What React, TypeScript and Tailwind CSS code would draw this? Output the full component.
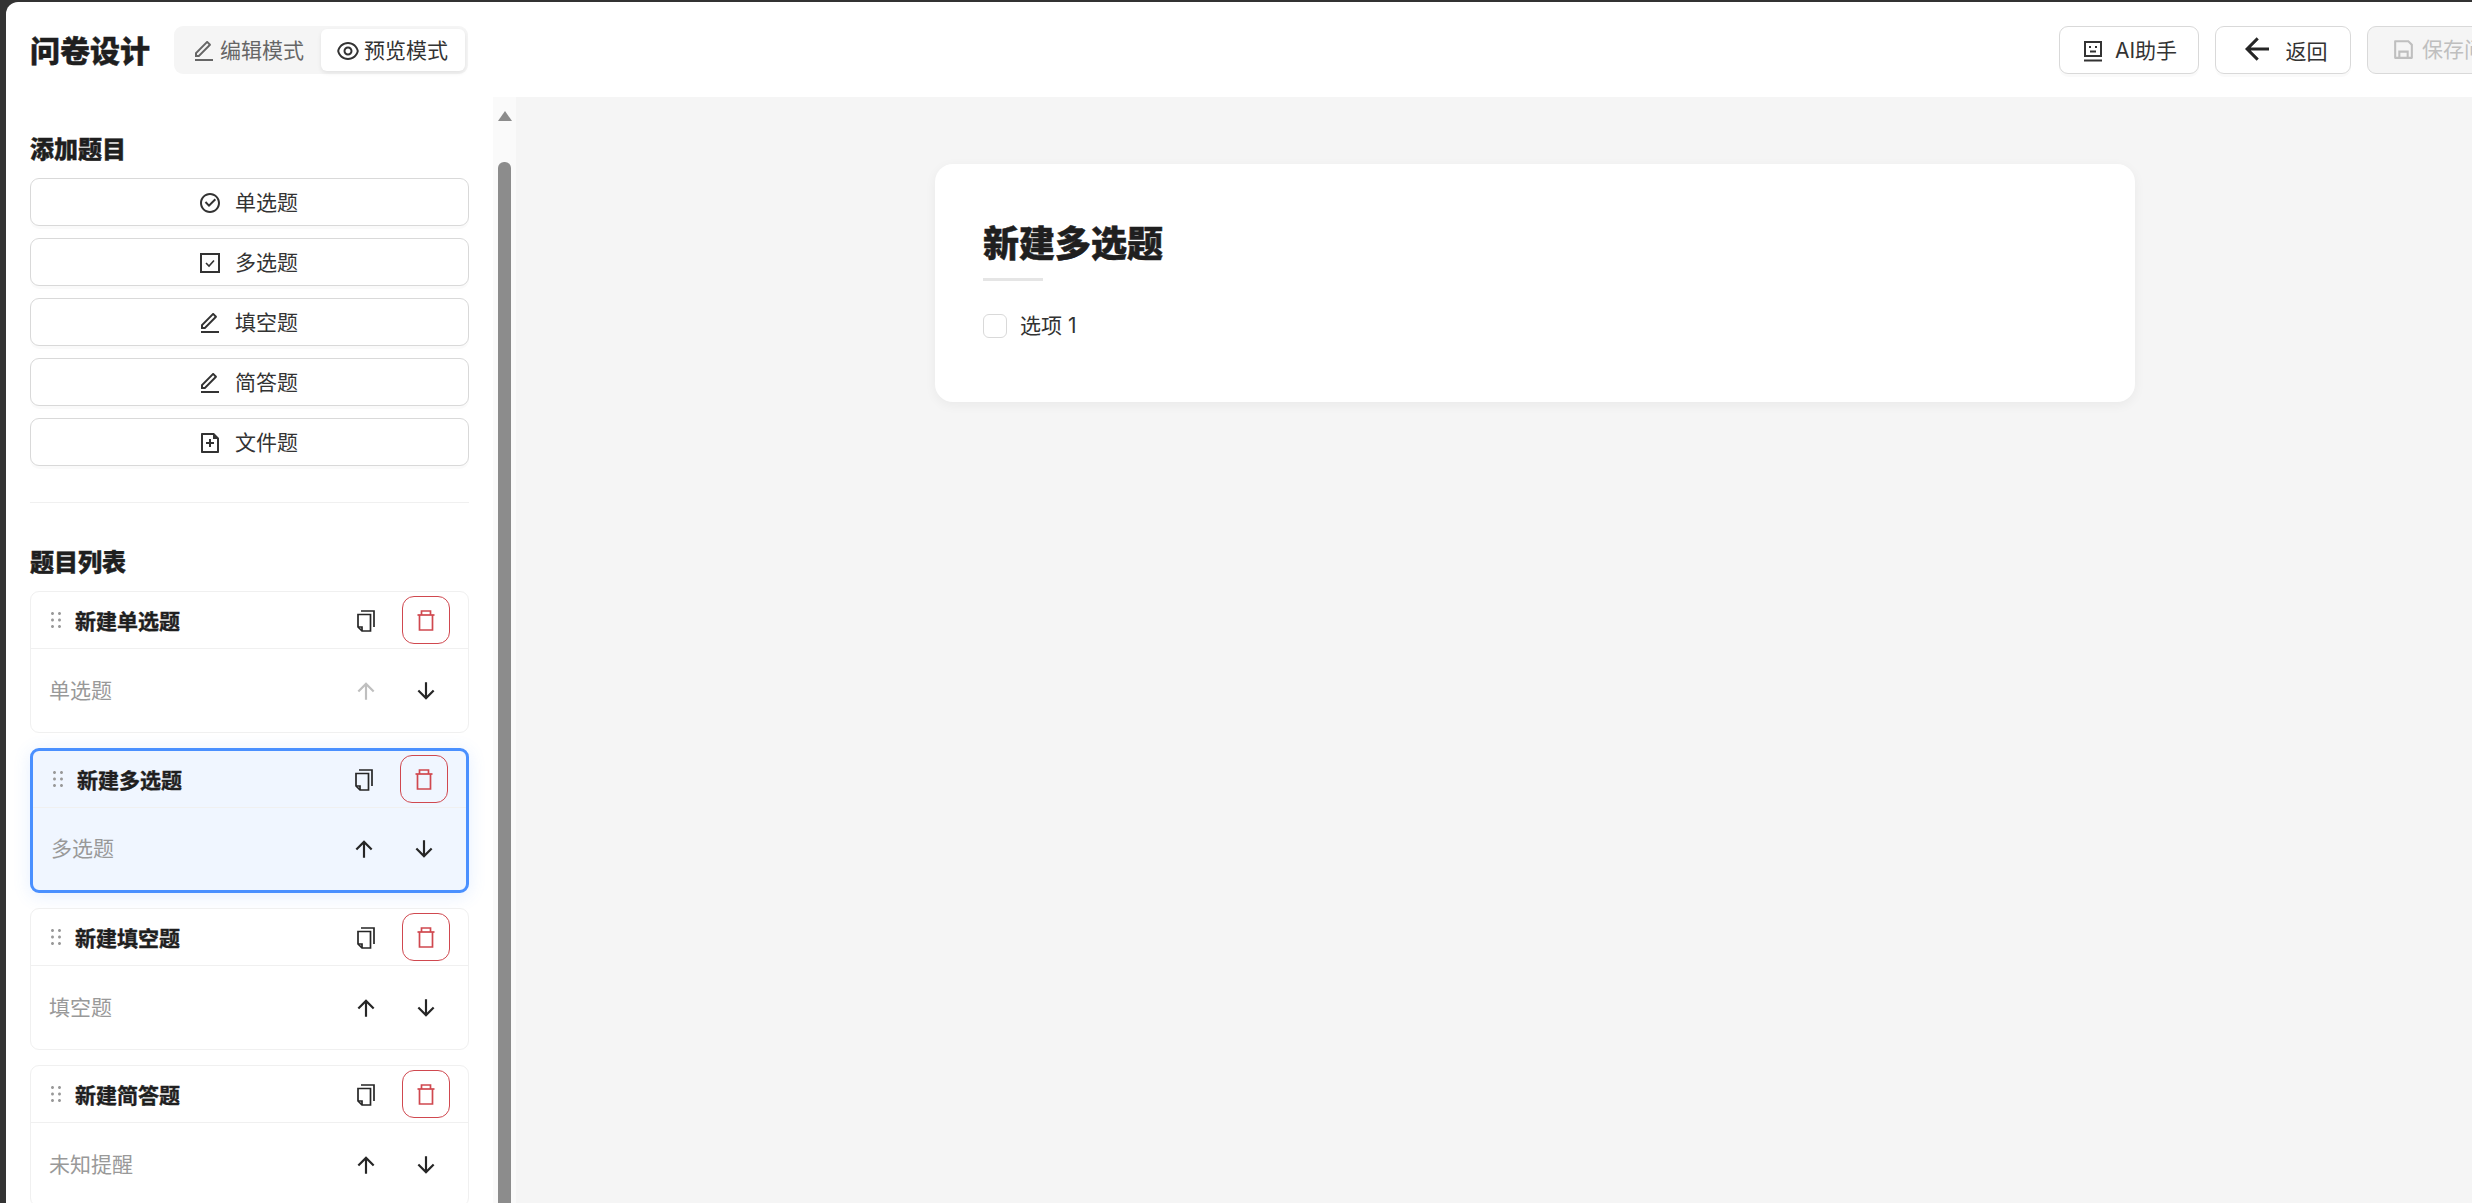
import {
  RiArrowDownLine,
  RiArrowLeftLine,
  RiArrowUpLine,
  RiCheckboxCircleLine,
  RiDraggable,
  RiEditLine,
  RiEyeLine,
  RiFileAddLine,
  RiSaveLine,
} from "react-icons/ri";

function SquareCheckIcon({ className }: { className?: string }) {
  return (
    <svg viewBox="0 0 24 24" className={className} fill="none" stroke="currentColor" strokeWidth="2">
      <rect x="3" y="3" width="18" height="18" />
      <path d="M8 12l3 3 5-5.5" strokeWidth="1.6" />
    </svg>
  );
}

const addItems = [
  { label: "单选题", Icon: RiCheckboxCircleLine },
  { label: "多选题", Icon: SquareCheckIcon },
  { label: "填空题", Icon: RiEditLine },
  { label: "简答题", Icon: RiEditLine },
  { label: "文件题", Icon: RiFileAddLine },
];

const questions = [
  { title: "新建单选题", sub: "单选题", upDisabled: true },
  { title: "新建多选题", sub: "多选题", selected: true },
  { title: "新建填空题", sub: "填空题" },
  { title: "新建简答题", sub: "未知提醒" },
];

function CopyIcon() {
  return (
    <svg viewBox="0 0 18 22" className="h-[22px] w-[18px]" fill="none" stroke="currentColor" strokeWidth="1.7">
      <path d="M4 1h13v16" />
      <path d="M1 4.5h12.5V21H5l-4-4z" />
      <path d="M1 17h4v4" />
    </svg>
  );
}

function TrashIcon() {
  return (
    <svg viewBox="0 0 18 21" className="h-[21px] w-[18px]" fill="none" stroke="currentColor" strokeWidth="1.7">
      <path d="M0.5 5h17" />
      <path d="M4.5 5V1h9v4" />
      <path d="M2.5 5v15h13V5" />
    </svg>
  );
}

function RobotIcon() {
  return (
    <svg viewBox="0 0 24 24" className="h-[24px] w-[24px]" fill="none" stroke="currentColor" strokeWidth="2">
      <rect x="4" y="3" width="16" height="14" />
      <path d="M3 21.5h18" />
      <path d="M8 8h2M14 8h2M9 12.5h6" />
    </svg>
  );
}

function QuestionCard({ title, sub, selected, upDisabled }: { title: string; sub: string; selected?: boolean; upDisabled?: boolean }) {
  return (
    <div
      className={
        selected
          ? "rounded-[9px] border-[3px] border-[#4a90ff] bg-[#f0f6ff] shadow-[0_3px_18px_rgba(74,144,255,0.14)]"
          : "rounded-[9px] border border-[#f0f0f0] bg-white"
      }
    >
      <div className="flex h-[57px] items-center border-b border-[#f0f0f0] pl-[13px] pr-[18px]">
        <RiDraggable className="h-[24px] w-[24px] text-[#999999]" />
        <span className="ml-[7px] flex-1 pt-[3px] text-[21px] font-bold text-[#1f1f1f] [-webkit-text-stroke:0.4px_#1f1f1f]">{title}</span>
        <div className="flex gap-[12px]">
          <button className="flex h-[48px] w-[48px] items-center justify-center pt-[2px] text-[#262626]">
            <CopyIcon />
          </button>
          <button className="flex h-[48px] w-[48px] items-center justify-center rounded-[12px] border border-[#d0484f] text-[#d0484f]">
            <TrashIcon />
          </button>
        </div>
      </div>
      <div className={selected ? "flex h-[82px] items-center px-[18px]" : "flex h-[83px] items-center px-[18px]"}>
        <span className="flex-1 text-[21px] text-[#999999]">{sub}</span>
        <div className="flex gap-[12px]">
          <button className={upDisabled ? "flex h-[48px] w-[48px] items-center justify-center text-[#bfbfbf]" : "flex h-[48px] w-[48px] items-center justify-center text-[#262626]"}>
            <RiArrowUpLine className="h-[26px] w-[26px]" />
          </button>
          <button className="flex h-[48px] w-[48px] items-center justify-center text-[#262626]">
            <RiArrowDownLine className="h-[26px] w-[26px]" />
          </button>
        </div>
      </div>
    </div>
  );
}

export default function App() {
  return (
    <div className="h-screen w-screen overflow-hidden bg-[#333333] pl-[6px] pt-[2px] font-['Inter','Noto_Sans_CJK_SC',sans-serif] text-[#333333]">
      <div className="flex h-full w-[2554px] flex-col overflow-hidden rounded-tl-[12px] bg-white">
        {/* header */}
        <header className="flex h-[95px] shrink-0 items-center justify-between pl-[24px] pr-[24px]">
          <div className="flex items-center gap-[24px]">
            <h1 className="pt-[3px] text-[30px] font-black text-[#1f1f1f] [-webkit-text-stroke:0.4px_#1f1f1f]">问卷设计</h1>
            <div className="flex h-[48px] items-center rounded-[9px] bg-[#f5f5f5] p-[3px]">
              <div className="flex h-[42px] w-[144px] items-center justify-center gap-[4px] pr-[2px] pt-[2px] text-[21px] text-[#666666]">
                <RiEditLine className="h-[24px] w-[24px]" />
                编辑模式
              </div>
              <div className="flex h-[42px] w-[144px] items-center justify-center gap-[4px] rounded-[6px] bg-white pr-[2px] pt-[2px] text-[21px] text-[#333333] shadow-[0_2px_4px_rgba(0,0,0,0.08)]">
                <RiEyeLine className="h-[24px] w-[24px]" />
                预览模式
              </div>
            </div>
          </div>
          <div className="flex items-center gap-[16px]">
            <button className="flex h-[48px] w-[140px] items-center justify-center gap-[10px] rounded-[9px] border border-[#d9d9d9] bg-white pt-[2px] text-[21px] shadow-[0_3px_0_rgba(0,0,0,0.02)]">
              <RobotIcon />
              AI助手
            </button>
            <button className="flex h-[48px] w-[136px] items-center justify-center gap-[11px] rounded-[9px] border border-[#d9d9d9] bg-white text-[21px] shadow-[0_3px_0_rgba(0,0,0,0.02)]">
              <RiArrowLeftLine className="mb-[2px] h-[36px] w-[36px] text-[#262626]" />
              <span className="pt-[5px]">返回</span>
            </button>
            <button className="flex h-[48px] items-center justify-center gap-[6px] rounded-[9px] border border-[#d9d9d9] bg-[#f5f5f5] pl-[23px] pr-[29px] text-[21px] text-[#bfbfbf]">
              <RiSaveLine className="h-[25px] w-[25px]" />
              保存问卷
            </button>
          </div>
        </header>

        <div className="flex min-h-0 flex-1">
          {/* sidebar */}
          <aside className="flex w-[510px] shrink-0 bg-white">
            <div className="w-[487px] shrink-0 overflow-hidden pl-[24px] pr-[24px] pt-[37px]">
              <h2 className="mb-[12px] text-[24px] font-black leading-[32px] text-[#1f1f1f] [-webkit-text-stroke:0.4px_#1f1f1f]">添加题目</h2>
              <div className="flex flex-col gap-[12px]">
                {addItems.map(({ label, Icon }) => (
                  <button
                    key={label}
                    className="flex h-[48px] items-center justify-center gap-[13px] rounded-[9px] border border-[#d9d9d9] bg-white pr-[3px] pt-[2px] text-[21px] shadow-[0_3px_0_rgba(0,0,0,0.02)]"
                  >
                    <Icon className="h-[24px] w-[24px]" />
                    {label}
                  </button>
                ))}
              </div>
              <div className="mb-[44px] mt-[36px] h-px bg-[#f0f0f0]" />
              <h2 className="mb-[12px] text-[24px] font-black leading-[32px] text-[#1f1f1f] [-webkit-text-stroke:0.4px_#1f1f1f]">题目列表</h2>
              <div className="flex flex-col gap-[15px]">
                {questions.map((q) => (
                  <QuestionCard key={q.title} {...q} />
                ))}
              </div>
            </div>
            {/* scrollbar */}
            <div className="flex w-[23px] shrink-0 flex-col items-center bg-[#fafafa] pt-[14px]">
              <div className="h-0 w-0 border-x-[7px] border-b-[10px] border-x-transparent border-b-[#8c8c8c]" />
              <div className="mt-[41px] w-[13px] flex-1 rounded-t-[6px] bg-[#8c8c8c]" />
            </div>
          </aside>

          {/* preview */}
          <main className="flex-1 bg-[#f5f5f5] pl-[419px] pt-[67px]">
            <div className="h-[238px] w-[1200px] rounded-[18px] bg-white px-[48px] pt-[48px] shadow-[0_3px_12px_rgba(0,0,0,0.05)]">
              <h2 className="mt-[5px] text-[36px] font-black leading-[54px] text-[#1f1f1f] [-webkit-text-stroke:0.5px_#1f1f1f]">新建多选题</h2>
              <div className="mt-[7px] h-[3px] w-[60px] bg-[#e5e5e5]" />
              <div className="mt-[29px] flex items-center gap-[13px] text-[21px]">
                <span className="h-[24px] w-[24px] rounded-[6px] border border-[#d9d9d9] bg-white" />
                选项 1
              </div>
            </div>
          </main>
        </div>
      </div>
    </div>
  );
}
